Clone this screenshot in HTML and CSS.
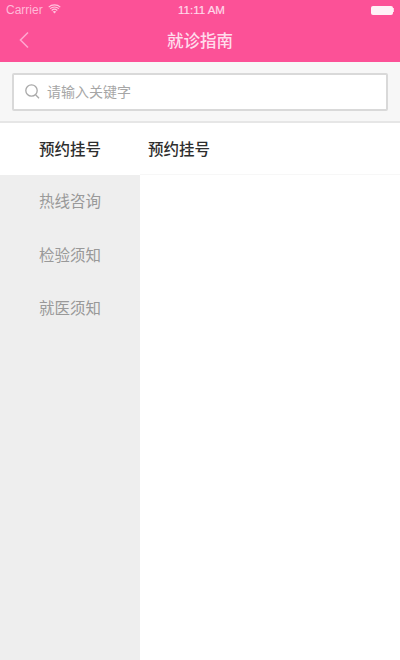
FILE: index.html
```html
<!DOCTYPE html>
<html lang="zh">
<head>
<meta charset="utf-8">
<title>就诊指南</title>
<link rel="stylesheet" href="styles.css">
</head>
<body>
<div class="app">
  <header class="header">
    <div class="status">
      <div class="status-left">
        <span>Carrier</span>
        <svg class="wifi" width="13" height="10" viewBox="0 0 13 10"><path d="M6.5 9.5L4.7 7.6C5.7 6.8 7.3 6.8 8.3 7.6Z" fill="#ffc4de"/><path d="M3.7 6.5C5.3 5 7.7 5 9.3 6.5M2.1 4.7C4.6 2.4 8.4 2.4 10.9 4.7M.7 3.1C3.9.1 9.1.1 12.3 3.1" fill="none" stroke="#ffc4de" stroke-width="1.1"/></svg>
      </div>
      <span class="status-time">11:11 AM</span>
      <div class="battery"><div class="battery-fill"></div><div class="battery-cap"></div></div>
    </div>
    <div class="navbar">
      <svg class="back" width="12" height="18" viewBox="0 0 12 18"><path d="M10 1.5L2.5 9L10 16.5" fill="none" stroke="#ffa6cf" stroke-width="1.6"/></svg>
      <h1 class="title">就诊指南</h1>
    </div>
  </header>
  <div class="search-bar">
    <div class="search-box">
      <svg class="search-icon" width="17" height="17" viewBox="0 0 17 17"><circle cx="7.5" cy="7.5" r="5.7" fill="none" stroke="#a9a9a9" stroke-width="1.3"/><path d="M11.6 11.8L15 15.2" stroke="#a9a9a9" stroke-width="1.3" fill="none"/></svg>
      <span class="placeholder">请输入关键字</span>
    </div>
  </div>
  <main class="content">
    <nav class="side">
      <div class="side-item active">预约挂号</div>
      <div class="side-item">热线咨询</div>
      <div class="side-item">检验须知</div>
      <div class="side-item">就医须知</div>
      <div class="side-rest"></div>
    </nav>
    <section class="detail">
      <div class="detail-row">预约挂号</div>
    </section>
  </main>
</div>
</body>
</html>
```
FILE: styles.css
```css
* { box-sizing: border-box; }
html, body { margin: 0; padding: 0; }
body { font-family: "Liberation Sans", "Noto Sans CJK SC", sans-serif; background: #fff; }
.app { width: 400px; height: 660px; display: flex; flex-direction: column; overflow: hidden; }
.header { height: 62px; background: #fc5197; flex: none; display: flex; flex-direction: column; }
.status { height: 20px; padding: 0 5px 0 6px; display: flex; align-items: center; justify-content: space-between; position: relative; font-size: 12px; color: #ffb9d8; }
.status-left { display: flex; align-items: center; gap: 5px; }
.wifi { margin-top: -2px; }
.status-time { position: absolute; left: 0; right: 0; text-align: center; font-size: 11.5px; font-weight: 400; color: #ffd9e9; padding-left: 3px; -webkit-text-stroke: .2px #ffd9e9; }
.battery { display: flex; align-items: center; margin-right: 1px; }
.battery-fill { width: 22px; height: 9px; background: #fff; border-radius: 2px; opacity: .92; }
.battery-cap { width: 1.5px; height: 4px; background: #ffd0e4; }
.navbar { flex: 1; position: relative; display: flex; align-items: center; justify-content: center; }
.back { position: absolute; left: 18px; top: 11px; }
.title { margin: 0; font-size: 16.5px; font-weight: 500; color: #ffdcec; font-family: "Noto Sans CJK SC", sans-serif; line-height: 1; transform: translateY(-1px); }
.search-bar { height: 61px; flex: none; background: #f7f7f7; border-bottom: 2px solid #e6e6e6; padding: 11px 12px 0; }
.search-box { height: 38px; background: #fff; border: 2px solid #d9d9d9; border-radius: 2px; display: flex; align-items: center; padding-left: 10px; gap: 6px; }
.search-icon { margin-top: -1px; }
.placeholder { font-size: 14px; color: #a6a6a6; font-family: "Noto Sans CJK SC", sans-serif; line-height: 1; transform: translateY(-1px); }
.content { flex: 1; display: flex; min-height: 0; }
.side { width: 140px; flex: none; display: flex; flex-direction: column; background: #eeeeee; }
.side-item { height: 53.3px; display: flex; align-items: center; justify-content: center; font-size: 15.5px; color: #999999; font-family: "Noto Sans CJK SC", sans-serif; padding-bottom: 3px; }
.side-item.active { height: 52.3px; background: #fff; color: #2e2e2e; font-weight: 500; padding-bottom: 2px; }
.side-rest { flex: 1; }
.detail { flex: 1; background: #fff; }
.detail-row { height: 52.3px; display: flex; align-items: center; padding: 0 0 2px 8px; font-size: 15.5px; font-weight: 500; color: #2e2e2e; border-bottom: 1px solid #f7f7f7; font-family: "Noto Sans CJK SC", sans-serif; }
```
